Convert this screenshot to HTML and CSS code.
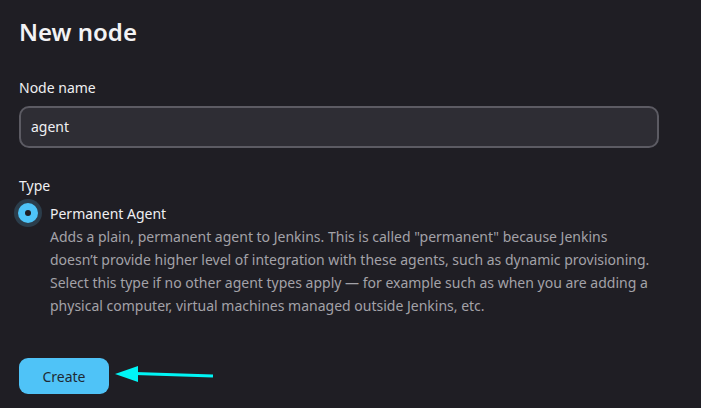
FILE: index.html
```html
<!DOCTYPE html>
<html>
<head>
<meta charset="utf-8">
<link rel="stylesheet" href="styles.css">
</head>
<body>
<main class="page">
  <h1 class="title">New node</h1>
  <div class="field name-field">
    <label class="label">Node name</label>
    <div class="input">agent</div>
  </div>
  <div class="field type">
    <div class="label">Type</div>
    <div class="option">
      <span class="radio"><span class="dot"></span></span>
      <div class="option-body">
        <div class="option-title">Permanent Agent</div>
        <div class="option-desc">Adds a plain, permanent agent to Jenkins. This is called "permanent" because Jenkins doesn’t provide higher level of integration with these agents, such as dynamic provisioning. Select this type if no other agent types apply — for example such as when you are adding a physical computer, virtual machines managed outside Jenkins, etc.</div>
      </div>
    </div>
  </div>
  <div class="actions">
    <button class="btn">Create</button>
    <svg class="arrow" width="102" height="20" viewBox="0 0 102 20">
      <line x1="22" y1="8.5" x2="100" y2="11" stroke="#00f5f5" stroke-width="3"/>
      <polygon points="2,9 25,1 25,17" fill="#00f5f5"/>
    </svg>
  </div>
</main>
</body>
</html>
```
FILE: styles.css
```css
html, body {
  margin: 0;
  padding: 0;
  background: #1f1e24;
  height: 100%;
}
body {
  font-family: "Noto Sans", "Open Sans", sans-serif;
  color: #efeff2;
}
.page {
  padding: 15px 42px 0 19px;
  display: flex;
  flex-direction: column;
}
.title {
  margin: 0;
  font-size: 24px;
  font-weight: 600;
  line-height: 34px;
  color: #f2f2f4;
}
.field {
  display: flex;
  flex-direction: column;
}
.name-field {
  margin-top: 29px;
}
.label {
  font-size: 14px;
  font-weight: 400;
  line-height: 20px;
  margin-bottom: 8px;
}
.input {
  height: 38px;
  border: 2px solid #5c5b63;
  border-radius: 10px;
  background: #2e2d34;
  font-size: 14px;
  line-height: 38px;
  padding: 0 10px;
  color: #efeff2;
}
.type {
  margin-top: 28px;
}
.type .label {
  margin-bottom: 6px;
}
.option {
  display: flex;
  gap: 12px;
  padding-right: 8px;
}
.radio {
  width: 20px;
  height: 20px;
  border-radius: 50%;
  background: #4ec4f8;
  box-shadow: 0 0 0 4px #2b3d4b;
  display: flex;
  align-items: center;
  justify-content: center;
  margin: 1px 0 0 -1px;
  flex: none;
}
.dot {
  width: 6px;
  height: 6px;
  border-radius: 50%;
  background: #1f1e24;
}
.option-title {
  font-size: 14px;
  font-weight: 400;
  line-height: 23px;
}
.option-desc {
  font-size: 14px;
  line-height: 23px;
  color: #a3a2a8;
}
.actions {
  margin-top: 41px;
  display: flex;
  align-items: center;
}
.btn {
  width: 90px;
  height: 36px;
  border: none;
  border-radius: 9px;
  background: #4fc3f7;
  color: #1f2a33;
  font-family: "Noto Sans", "Open Sans", sans-serif;
  font-size: 14px;
  font-weight: 400;
  padding: 0;
}
.arrow {
  margin-left: 4px;
  margin-top: -2px;
}
```
